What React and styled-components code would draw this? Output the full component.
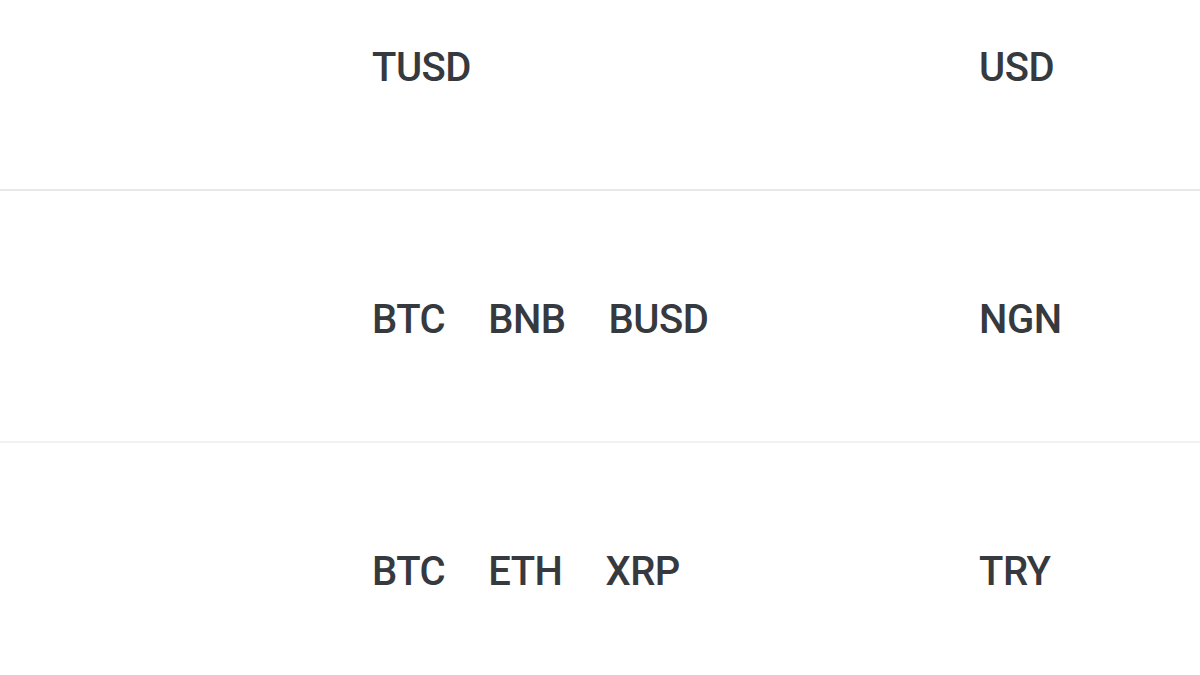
import React from 'react'
import styled, { createGlobalStyle } from 'styled-components'

const GlobalStyle = createGlobalStyle`
    html, body {
        margin: 0;
        padding: 0;
        background: #ffffff;
        overflow: hidden;
    }
`

const pairs = [
    { crypto: ['TUSD'], fiat: 'USD', line: 'strong' },
    { crypto: ['BTC', 'BNB', 'BUSD'], fiat: 'NGN', line: 'soft' },
    { crypto: ['BTC', 'ETH', 'XRP'], fiat: 'TRY', line: 'none' },
]

function App() {
    return (
        <>
            <GlobalStyle />
            <Page>
                <Table>
                    {pairs.map((row, i) => (
                        <Row key={i} $line={row.line}>
                            <Spacer />
                            <CryptoList>
                                {row.crypto.map(c => (
                                    <Ticker key={c}>{c}</Ticker>
                                ))}
                            </CryptoList>
                            <Ticker>{row.fiat}</Ticker>
                        </Row>
                    ))}
                </Table>
            </Page>
        </>
    )
}

export default App

const Page = styled.div`
    width: 1200px;
    height: 675px;
    overflow: hidden;
    background: #ffffff;
`

// table is scrolled a little, so the first row is cut at the top
const Table = styled.div`
    display: flex;
    flex-direction: column;
    margin-top: -61px;
`

const Row = styled.div`
    display: grid;
    grid-template-columns: 372px 607px 1fr;
    align-items: center;
    height: 252px;
    padding-top: 8px;
    box-sizing: border-box;
    border-bottom: 2px solid ${p =>
        p.$line === 'strong' ? '#e8e8e8' : p.$line === 'soft' ? '#f1f1f1' : 'transparent'};
`

const Spacer = styled.div``

const CryptoList = styled.div`
    display: flex;
    gap: 43px;
`

const Ticker = styled.span`
    font-family: Roboto, "Liberation Sans", sans-serif;
    font-weight: 500;
    font-size: 40px;
    letter-spacing: -0.5px;
    color: #36393e;
    line-height: 1;
`
